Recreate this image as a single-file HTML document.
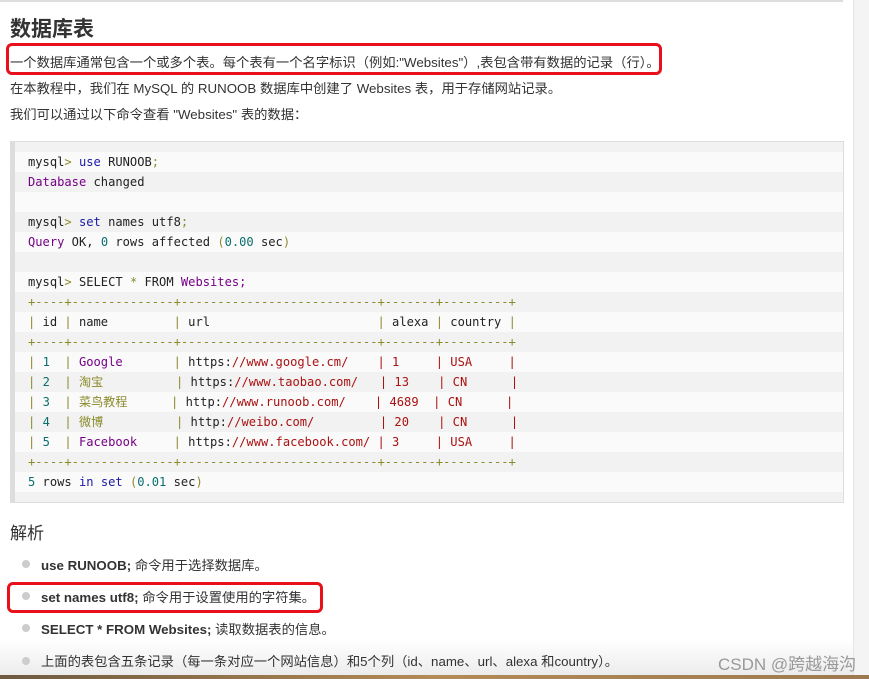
<!DOCTYPE html>
<html><head><meta charset="utf-8"><style>
*{margin:0;padding:0;box-sizing:border-box}
body{width:869px;height:679px;overflow:hidden;background:#fff;position:relative;font-family:"Liberation Sans","Noto Sans CJK SC",sans-serif;color:#333}
.abs{position:absolute;white-space:nowrap}
.topline{position:absolute;left:0;top:0;width:843px;height:2px;background:#ddd}
.rs{position:absolute;left:853px;top:0;width:16px;height:679px;background:#f4f4f4;border-left:1px solid #e6e6e6}
h1{position:absolute;left:10px;top:13px;font-size:21px;font-weight:bold;color:#333}
.p{font-size:13.3px;color:#333}
.box{position:absolute;border:3px solid #e8101a;border-radius:6px}
.code{position:absolute;left:10px;top:141px;width:834px;height:362px;background:#f2f2f2;border:1px solid #ddd;border-left:5px solid #ddd}
.ln{position:absolute;left:0;width:828px;height:20px}
.ln.l{background:#fafafa}
.ct{position:absolute;left:28px;font-family:"DejaVu Sans Mono","Noto Sans CJK SC",monospace;font-size:12.1px;color:#222;white-space:pre;line-height:20px}
.k{color:#1a1aa6}.pu{color:#770088}.n{color:#116644}.g{color:#8a8a2a}.r{color:#a11}.t{color:#0a6e6e}.o{color:#8b8b2b}
h2{position:absolute;left:10px;top:519px;font-size:17px;font-weight:normal;color:#333}
.li{position:absolute;left:41px;font-size:13.3px;color:#333;white-space:nowrap}
.dot{position:absolute;left:22px;width:8px;height:8px;border-radius:50%;background:#ccc}
</style></head><body>
<div class="topline"></div>
<div class="rs"></div>
<h1>数据库表</h1>
<div class="abs p" style="left:10px;top:52px">一个数据库通常包含一个或多个表。每个表有一个名字标识（例如:"Websites"）,表包含带有数据的记录（行）。</div>
<div class="box" style="left:6px;top:43px;width:656px;height:32px"></div>
<div class="abs p" style="left:10px;top:78px">在本教程中，我们在 MySQL 的 RUNOOB 数据库中创建了 Websites 表，用于存储网站记录。</div>
<div class="abs p" style="left:10px;top:104px">我们可以通过以下命令查看 "Websites" 表的数据：</div>
<div class="code">
<div class="ln l" style="top:10px"></div><div class="ln l" style="top:50px"></div><div class="ln l" style="top:90px"></div><div class="ln l" style="top:130px"></div><div class="ln l" style="top:170px"></div><div class="ln l" style="top:210px"></div><div class="ln l" style="top:250px"></div><div class="ln l" style="top:290px"></div><div class="ln l" style="top:330px"></div>
</div>
<div class="ct" style="top:152px">mysql<span class="o">&gt;</span> <span class="k">use</span> RUNOOB<span class="o">;</span>
<span class="pu">Database</span> changed

mysql<span class="o">&gt;</span> <span class="k">set</span> names utf8<span class="o">;</span>
<span class="pu">Query</span> OK, <span class="t">0</span> rows affected <span class="o">(</span><span class="t">0.00</span> sec<span class="o">)</span>

mysql<span class="o">&gt;</span> SELECT <span class="o">*</span> FROM <span class="pu">Websites;</span>
<span class="o">+----+--------------+---------------------------+-------+---------+</span>
<span class="o">|</span> id <span class="o">|</span> name         <span class="o">|</span> url                       <span class="o">|</span> alexa <span class="o">|</span> country <span class="o">|</span>
<span class="o">+----+--------------+---------------------------+-------+---------+</span>
<span class="o">|</span> <span class="t">1</span>  <span class="o">|</span> <span class="pu">Google</span>       <span class="o">|</span> https:<span class="r">//www.google.cm/</span>    <span class="r">| 1     | USA     |</span>
<span class="o">|</span> <span class="t">2</span>  <span class="o">|</span> <span class="g">淘宝</span>          <span class="o">|</span> https:<span class="r">//www.taobao.com/</span>   <span class="r">| 13    | CN      |</span>
<span class="o">|</span> <span class="t">3</span>  <span class="o">|</span> <span class="g">菜鸟教程</span>      <span class="o">|</span> http:<span class="r">//www.runoob.com/</span>    <span class="r">| 4689  | CN      |</span>
<span class="o">|</span> <span class="t">4</span>  <span class="o">|</span> <span class="g">微博</span>          <span class="o">|</span> http:<span class="r">//weibo.com/</span>         <span class="r">| 20    | CN      |</span>
<span class="o">|</span> <span class="t">5</span>  <span class="o">|</span> <span class="pu">Facebook</span>     <span class="o">|</span> https:<span class="r">//www.facebook.com/</span> <span class="r">| 3     | USA     |</span>
<span class="o">+----+--------------+---------------------------+-------+---------+</span>
<span class="t">5</span> rows <span class="k">in</span> <span class="k">set</span> <span class="o">(</span><span class="t">0.01</span> sec<span class="o">)</span></div>
<h2>解析</h2>
<div class="dot" style="top:560px"></div><div class="li" style="top:555px"><b>use RUNOOB;</b> 命令用于选择数据库。</div>
<div class="dot" style="top:592px"></div><div class="li" style="top:587px"><b>set names utf8;</b> 命令用于设置使用的字符集。</div>
<div class="box" style="left:7px;top:582px;width:316px;height:31px"></div>
<div class="dot" style="top:624px"></div><div class="li" style="top:619px"><b>SELECT * FROM Websites;</b> 读取数据表的信息。</div>
<div style="position:absolute;left:0;top:640px;width:853px;height:35px;background:linear-gradient(#fff,#ececec)"></div>
<div class="dot" style="top:657px"></div><div class="li" style="top:651px">上面的表包含五条记录（每一条对应一个网站信息）和5个列（id、name、url、alexa 和country）。</div>
<div class="abs" style="left:718px;top:650px;font-size:17px;color:#999">CSDN @跨越海沟</div>
<div style="position:absolute;left:0;top:675px;width:869px;height:4px;background:linear-gradient(90deg,#6d5a40,#b48a55,#9c7a50)"></div>
</body></html>
